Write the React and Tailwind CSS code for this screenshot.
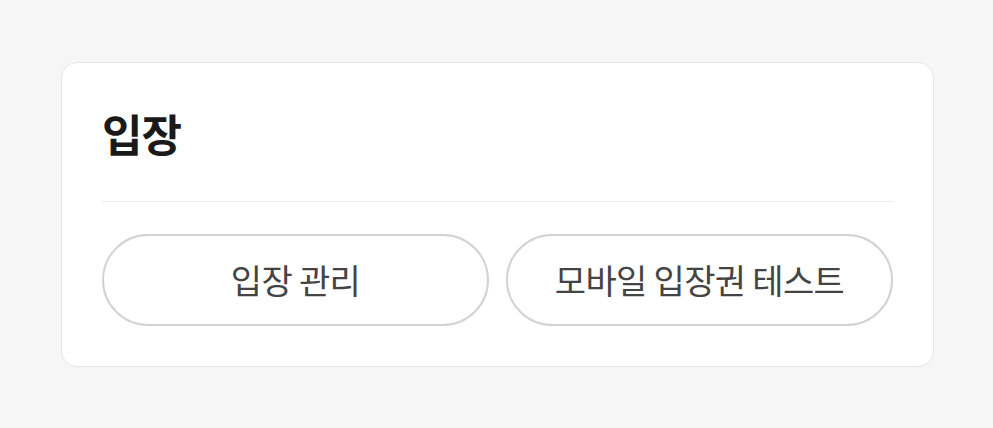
export default function App() {
  return (
    <div className="min-h-screen bg-[#f6f6f6] pt-[62px] font-['Noto_Sans_CJK_KR','Noto_Sans',sans-serif]">
      <div className="ml-[61px] w-[873px] rounded-2xl border border-[#e6e6e6] bg-white px-10 pb-10">
        <div className="pt-[44px] pb-[41px]">
          <h2 className="text-[44px] font-semibold leading-[1.2] tracking-[-0.02em] text-[#1a1a1a]">입장</h2>
        </div>
        <div className="h-px bg-[#ececec]" />
        <div className="mt-8 grid grid-cols-2 gap-[17px]">
          <button className="h-[92px] rounded-full border-2 border-[#d2d2d2] bg-white text-[34px] tracking-[-0.02em] text-[#444]">
            입장 관리
          </button>
          <button className="h-[92px] rounded-full border-2 border-[#d2d2d2] bg-white text-[34px] tracking-[-0.02em] text-[#444]">
            모바일 입장권 테스트
          </button>
        </div>
      </div>
    </div>
  )
}
